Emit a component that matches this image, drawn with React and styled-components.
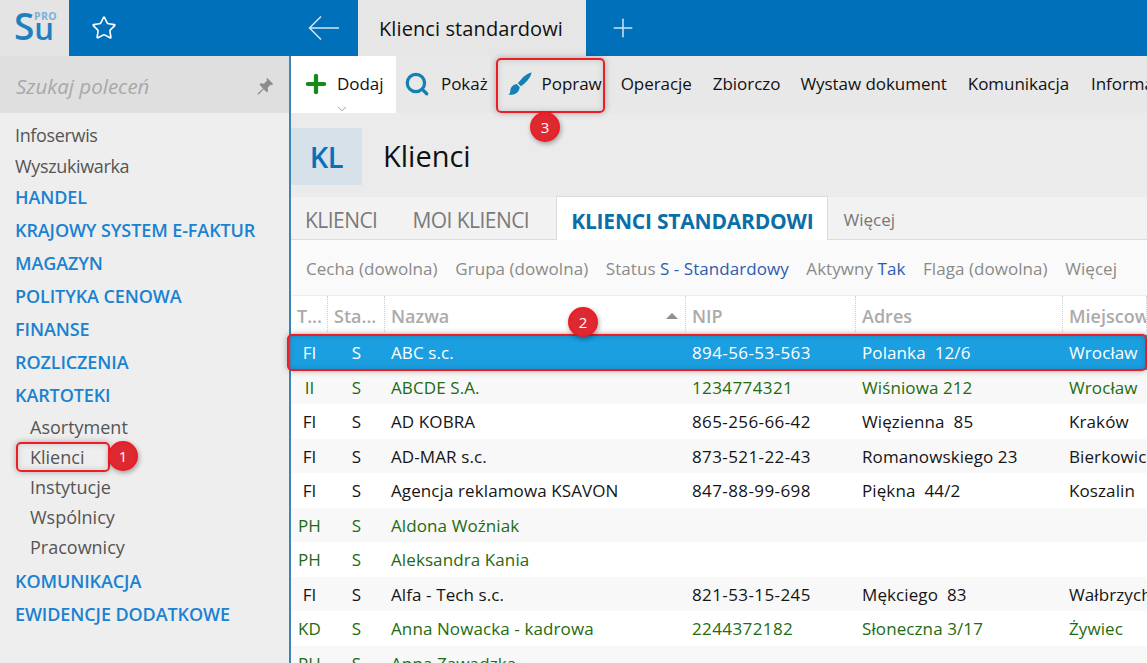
import React from 'react';
import styled, { createGlobalStyle } from 'styled-components';
import { Star, Search, Plus, ChevronDown } from 'lucide-react';

const GlobalStyle = createGlobalStyle`
  html, body { margin: 0; height: 100%; overflow: hidden; background: #fff; }
  #root { height: 100%; }
  * { box-sizing: border-box; }
`;

const Page = styled.div`
  position: relative;
  width: 1147px;
  height: 663px;
  overflow: hidden;
  font-family: "Open Sans", "Noto Sans", sans-serif;
  letter-spacing: -0.35px;
  color: #1a1a1a;
`;

const TopBar = styled.div`
  display: flex;
  height: 56px;
  background: #0070ba;
`;

const LogoBox = styled.div`
  position: relative;
  width: 69px;
  background: #e4e4e4;
  flex: none;
`;

const LogoSu = styled.span`
  position: absolute;
  left: 14px;
  top: 7px;
  font-size: 37px;
  line-height: 1;
  font-weight: 600;
  letter-spacing: 0;
  color: #1f80c0;
`;

const LogoU = styled.span`
  font-size: 31px;
`;

const LogoPro = styled.span`
  position: absolute;
  left: 34px;
  top: 11px;
  font-size: 10.5px;
  line-height: 1;
  font-weight: 700;
  letter-spacing: 0.4px;
  color: #7db0d6;
`;

const StarSlot = styled.div`
  display: flex;
  align-items: center;
  width: 239px;
  padding-left: 22px;
  color: #fff;
`;

const BackSlot = styled.div`
  display: flex;
  align-items: center;
  width: 50px;
`;

const ActiveTab = styled.div`
  display: flex;
  align-items: center;
  width: 228px;
  padding-left: 21px;
  background: #e6e6e6;
  font-size: 20px;
  font-weight: 500;
  letter-spacing: 0.1px;
  color: #111;
`;

const PlusSlot = styled.div`
  display: flex;
  align-items: center;
  padding-left: 22px;
  color: #cfe3f2;
`;

const Body = styled.div`
  display: flex;
  height: 607px;
`;

const Sidebar = styled.aside`
  width: 289px;
  flex: none;
  background: #eeeeee;
`;

const SearchBar = styled.div`
  display: flex;
  align-items: center;
  justify-content: space-between;
  height: 57px;
  padding: 4px 15px 2px 16px;
  background: #dfdfdf;
  font-size: 20.5px;
  font-style: italic;
  letter-spacing: 0;
  color: #a8a8a8;
`;

const Menu = styled.nav`
  display: flex;
  flex-direction: column;
  padding-top: 7px;
`;

const MenuItem = styled.div`
  height: 31px;
  line-height: 30px;
  padding-left: 15px;
  font-size: 18px;
  color: #555;
`;

const MenuGroup = styled.div`
  height: 33px;
  line-height: 30px;
  padding-left: 15px;
  font-size: 18px;
  font-weight: 600;
  letter-spacing: -0.1px;
  color: #1a82d0;
  text-transform: uppercase;
`;

const SubList = styled.div`
  margin-top: -1px;
  padding-bottom: 4px;
`;

const SubItem = styled.div`
  height: 30px;
  line-height: 30px;
  padding-left: 30px;
  font-size: 18px;
  letter-spacing: 0;
  color: #555;
`;

const Main = styled.main`
  flex: 1;
  min-width: 0;
  border-left: 2px solid #3d84b8;
  background: #ebebeb;
`;

const Toolbar = styled.div`
  display: flex;
  height: 57px;
  background: #e8e8e8;
  font-size: 17px;
  letter-spacing: -0.05px;
  white-space: nowrap;
`;

const AddButton = styled.div`
  position: relative;
  flex: none;
  display: flex;
  align-items: center;
  gap: 7px;
  width: 105px;
  padding: 0 0 2px 11px;
  background: #fff;
  color: #111;
`;

const Caret = styled.span`
  position: absolute;
  left: 44px;
  bottom: 1px;
  height: 14px;
  color: #8b8b8b;
`;

const ToolButton = styled.div`
  flex: none;
  display: flex;
  align-items: center;
  gap: ${p => p.$gap || 0}px;
  margin-left: ${p => p.$left || 0}px;
  padding-bottom: 2px;
  color: #111;
`;

const TitleRow = styled.div`
  display: flex;
  align-items: center;
  height: 84px;
  padding-top: 2px;
  gap: 21px;
`;

const Badge = styled.div`
  display: flex;
  align-items: center;
  justify-content: center;
  width: 71px;
  height: 57px;
  background: #d6e1ea;
  color: #0b70b8;
  font-size: 29px;
  font-weight: 600;
`;

const Title = styled.h1`
  margin: -2px 0 0;
  font-size: 29px;
  font-weight: 400;
  letter-spacing: 0;
  color: #111;
`;

const Tabs = styled.div`
  display: flex;
  align-items: flex-end;
  height: 43px;
  background: #f2f2f2;
  border-bottom: 1px solid #dcdcdc;
  font-size: 21px;
  letter-spacing: -0.55px;
  white-space: nowrap;
`;

const Tab = styled.div`
  display: flex;
  align-items: center;
  height: 42px;
  padding-top: 4px;
  margin-left: ${p => p.$left}px;
  color: #7a7a7a;
`;

const TabActive = styled.div`
  display: flex;
  align-items: center;
  height: 44px;
  margin-left: 27px;
  margin-bottom: -1px;
  padding: 4px 14px 0 14px;
  background: #fff;
  border: 1px solid #dcdcdc;
  border-bottom: none;
  font-weight: 700;
  letter-spacing: -0.2px;
  color: #0a6ea8;
`;

const TabMore = styled.div`
  display: flex;
  align-items: center;
  height: 42px;
  padding-top: 3px;
  margin-left: 15px;
  font-size: 17px;
  letter-spacing: 0;
  color: #777;
`;

const Filters = styled.div`
  display: flex;
  align-items: center;
  gap: 17.6px;
  height: 56px;
  padding: 1px 0 0 15px;
  background: #fafafa;
  border-bottom: 1px solid #ececec;
  font-size: 17px;
  letter-spacing: 0.05px;
  color: #8a8a8a;
  white-space: nowrap;
`;

const FilterValue = styled.span`
  color: #2a5db0;
`;

const columns = '37px 57px 301px 170px 207px 1fr';

const HeaderRow = styled.div`
  display: grid;
  grid-template-columns: ${columns};
  height: 39px;
  background: #fff;
  box-shadow: inset 0 -3px 2px -2px #d4d4d4;
  font-size: 18px;
  font-weight: 600;
  letter-spacing: 0;
  color: #ababab;
  white-space: nowrap;
`;

const HeaderCell = styled.div`
  display: flex;
  align-items: center;
  justify-content: space-between;
  padding: 3px 11px 0 6px;
  border-right: 1px dotted #cfcfcf;
  height: 36px;
  overflow: hidden;
`;

const SortArrow = styled.span`
  width: 0;
  height: 0;
  border-left: 6px solid transparent;
  border-right: 6px solid transparent;
  border-bottom: 6px solid #8f8f8f;
  margin-right: -4px;
`;

const Row = styled.div`
  display: grid;
  grid-template-columns: ${columns};
  align-items: center;
  height: 34.5px;
  padding-top: 1px;
  font-size: 17px;
  letter-spacing: 0.1px;
  white-space: nowrap;
  background: ${p => (p.$selected ? '#1b9fe0' : p.$odd ? '#f8f8f8' : '#fff')};
  color: ${p => (p.$selected ? '#fff' : p.$green ? '#1e6b10' : '#151515')};
`;

const Cell = styled.div`
  padding-left: 6px;
  overflow: hidden;
  white-space: pre;
  letter-spacing: ${p => (p.$wide ? '0.4px' : 'inherit')};
`;

const CenterCell = styled.div`
  text-align: center;
`;

const Outline = styled.div`
  position: absolute;
  left: ${p => p.$x}px;
  top: ${p => p.$y}px;
  width: ${p => p.$w}px;
  height: ${p => p.$h}px;
  border: 2px solid #ee1c25;
  border-radius: 5px;
  box-shadow: 0 0 6px rgba(0, 0, 0, 0.3), inset 0 0 6px rgba(0, 0, 0, 0.15);
  pointer-events: none;
`;

const Marker = styled.div`
  position: absolute;
  left: ${p => p.$x}px;
  top: ${p => p.$y}px;
  display: flex;
  align-items: center;
  justify-content: center;
  width: 30px;
  height: 30px;
  border: 2px solid #ee1c25;
  border-radius: 50%;
  background: #dc2a30;
  box-shadow: 1px 2px 5px rgba(0, 0, 0, 0.35);
  color: #fff;
  font-size: 15px;
  letter-spacing: 0;
`;

const menuTop = ['Infoserwis', 'Wyszukiwarka'];
const groupsA = ['Handel', 'Krajowy system e-faktur', 'Magazyn', 'Polityka cenowa', 'Finanse', 'Rozliczenia', 'Kartoteki'];
const subItems = ['Asortyment', 'Klienci', 'Instytucje', 'Wspólnicy', 'Pracownicy'];
const groupsB = ['Komunikacja', 'Ewidencje dodatkowe'];

const rows = [
  { t: 'FI', name: 'ABC s.c.', nip: '894-56-53-563', addr: 'Polanka  12/6', city: 'Wrocław', selected: true },
  { t: 'II', name: 'ABCDE S.A.', nip: '1234774321', addr: 'Wiśniowa 212', city: 'Wrocław', green: true },
  { t: 'FI', name: 'AD KOBRA', nip: '865-256-66-42', addr: 'Więzienna  85', city: 'Kraków' },
  { t: 'FI', name: 'AD-MAR s.c.', nip: '873-521-22-43', addr: 'Romanowskiego 23', city: 'Bierkowice' },
  { t: 'FI', name: 'Agencja reklamowa KSAVON', nip: '847-88-99-698', addr: 'Piękna  44/2', city: 'Koszalin' },
  { t: 'PH', name: 'Aldona Woźniak', nip: '', addr: '', city: '', green: true },
  { t: 'PH', name: 'Aleksandra Kania', nip: '', addr: '', city: '', green: true },
  { t: 'FI', name: 'Alfa - Tech s.c.', nip: '821-53-15-245', addr: 'Mękciego  83', city: 'Wałbrzych' },
  { t: 'KD', name: 'Anna Nowacka - kadrowa', nip: '2244372182', addr: 'Słoneczna 3/17', city: 'Żywiec', green: true },
  { t: 'PH', name: 'Anna Zawadzka', nip: '', addr: '', city: '', green: true },
];

const BackArrow = () => (
  <svg width="32" height="26" viewBox="0 0 32 26" fill="none" stroke="#d5e6f3" strokeWidth="1.5">
    <path d="M31 13H2M13 1.500L1.500 13 13 24.500" />
  </svg>
);

const PinIcon = () => (
  <svg width="18" height="18" viewBox="0 0 18 18" fill="#8c8c8c">
    <path d="M11 .8l6.200 6.200-1.400 1.200-1-.6-3.200 3.200.5 3.200-1.300 1.300-3.100-3.100-4.600 4.900-1.600.6.6-1.600 4.900-4.700L3.400 7.600l1.300-1.300 3.200.5 3.200-3.200-.6-1z" />
  </svg>
);

const BrushIcon = () => (
  <svg width="24" height="24" viewBox="0 0 24 24" fill="#1480b4">
    <path d="M23.500.6c-.3 3.400-3.400 7.800-7 11-1.200 1.100-2.400 2-3.500 2.700l-3.200-3c.9-1.300 2-2.600 3.300-3.900C16.200 4 20.500 1 23.500.6z" />
    <path d="M8.700 12.100l3 2.900c-.1 3.600-2.600 6.900-6.600 7.600-1.600.3-3.300.2-4.600-.2 1.300-.8 1.700-1.900 1.800-3.500.2-3.400 2.800-6.500 6.400-6.800z" />
  </svg>
);

const App = () => (
  <Page>
    <GlobalStyle />
    <TopBar>
      <LogoBox>
        <LogoSu>S<LogoU>u</LogoU></LogoSu>
        <LogoPro>PRO</LogoPro>
      </LogoBox>
      <StarSlot><Star size={26} strokeWidth={1.5} /></StarSlot>
      <BackSlot><BackArrow /></BackSlot>
      <ActiveTab>Klienci standardowi</ActiveTab>
      <PlusSlot><Plus size={30} strokeWidth={1.2} /></PlusSlot>
    </TopBar>
    <Body>
      <Sidebar>
        <SearchBar>
          Szukaj poleceń
          <PinIcon />
        </SearchBar>
        <Menu>
          {menuTop.map(item => <MenuItem key={item}>{item}</MenuItem>)}
          {groupsA.map(item => <MenuGroup key={item}>{item}</MenuGroup>)}
          <SubList>
            {subItems.map(item => <SubItem key={item}>{item}</SubItem>)}
          </SubList>
          {groupsB.map(item => <MenuGroup key={item}>{item}</MenuGroup>)}
        </Menu>
      </Sidebar>
      <Main>
        <Toolbar>
          <AddButton>
            <Plus size={28} strokeWidth={3.6} color="#138a1c" />
            Dodaj
            <Caret><ChevronDown size={14} strokeWidth={1.5} /></Caret>
          </AddButton>
          <ToolButton $left={8} $gap={11}>
            <Search size={26} strokeWidth={3} color="#1480b4" />
            Pokaż
          </ToolButton>
          <ToolButton $left={20} $gap={10}>
            <BrushIcon />
            Popraw
          </ToolButton>
          <ToolButton $left={19}>Operacje</ToolButton>
          <ToolButton $left={21}>Zbiorczo</ToolButton>
          <ToolButton $left={20}>Wystaw dokument</ToolButton>
          <ToolButton $left={21}>Komunikacja</ToolButton>
          <ToolButton $left={22}>Informacje</ToolButton>
        </Toolbar>
        <TitleRow>
          <Badge>KL</Badge>
          <Title>Klienci</Title>
        </TitleRow>
        <Tabs>
          <Tab $left={14}>KLIENCI</Tab>
          <Tab $left={35}>MOI KLIENCI</Tab>
          <TabActive>KLIENCI STANDARDOWI</TabActive>
          <TabMore>Więcej</TabMore>
        </Tabs>
        <Filters>
          <span>Cecha (dowolna)</span>
          <span>Grupa (dowolna)</span>
          <span>Status <FilterValue>S - Standardowy</FilterValue></span>
          <span>Aktywny <FilterValue>Tak</FilterValue></span>
          <span>Flaga (dowolna)</span>
          <span>Więcej</span>
        </Filters>
        <HeaderRow>
          <HeaderCell>T...</HeaderCell>
          <HeaderCell>Sta...</HeaderCell>
          <HeaderCell>Nazwa<SortArrow /></HeaderCell>
          <HeaderCell>NIP</HeaderCell>
          <HeaderCell>Adres</HeaderCell>
          <HeaderCell>Miejscowość</HeaderCell>
        </HeaderRow>
        {rows.map((r, i) => (
          <Row key={r.name} $selected={r.selected} $green={r.green} $odd={i % 2 === 1}>
            <CenterCell>{r.t}</CenterCell>
            <CenterCell>S</CenterCell>
            <Cell>{r.name}</Cell>
            <Cell $wide>{r.nip}</Cell>
            <Cell>{r.addr}</Cell>
            <Cell>{r.city}</Cell>
          </Row>
        ))}
      </Main>
    </Body>
    <Outline $x={16} $y={442} $w={94} $h={30} />
    <Marker $x={108} $y={441}>1</Marker>
    <Outline $x={287} $y={334} $w={860} $h={37} />
    <Marker $x={568} $y={307}>2</Marker>
    <Outline $x={496} $y={58} $w={109} $h={55} />
    <Marker $x={530} $y={112}>3</Marker>
  </Page>
);

export default App;
